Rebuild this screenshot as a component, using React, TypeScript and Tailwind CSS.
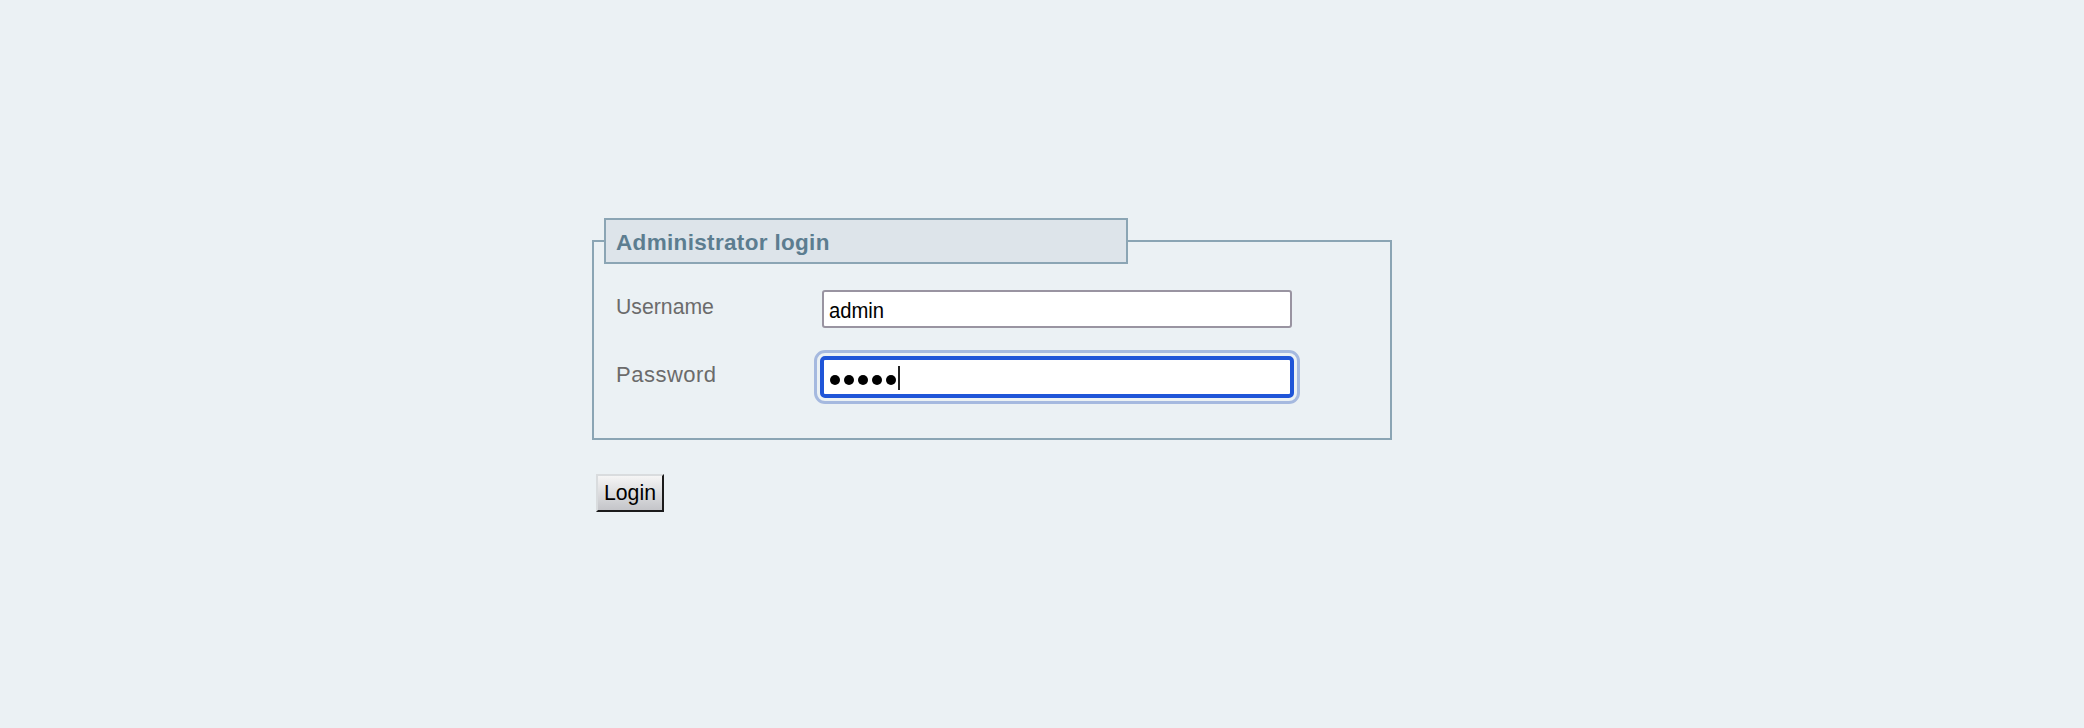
export default function App() {
  return (
    <main className="h-[728px] w-full overflow-hidden bg-[#ebf1f4] pt-[218px] pl-[592px] font-['Liberation_Sans',Arial,sans-serif]">
      <form onSubmit={(e) => e.preventDefault()}>
        <section className="flex w-[800px] flex-col">
          <div className="grid h-[46px] grid-cols-[12px_524px_264px]">
            <div className="mt-[22px] border-t-2 border-l-2 border-[#8ba5b4]" />
            <h1 className="flex items-center border-2 border-[#8ba5b4] bg-[#dde4ea] pt-[4px] pl-[10px] text-[22.5px] leading-none font-bold tracking-[0.33px] text-[#5c7d90]">
              Administrator login
            </h1>
            <div className="mt-[22px] border-t-2 border-r-2 border-[#8ba5b4]" />
          </div>
          <div className="flex h-[176px] flex-col border-x-2 border-b-2 border-[#8ba5b4] pt-[26px] pl-[22px]">
            <div className="flex h-[38px]">
              <label className="w-[206px] pt-[5px] text-[22px] leading-6 text-[#6b6b6b]">
                <span className="inline-block origin-left scale-x-[0.965]">Username</span>
              </label>
              <div className="flex w-[470px] items-center rounded-[3px] border-2 border-[#9994a1] bg-white pt-[3px] pl-[5px] text-[22px] leading-6 text-black">
                <span className="inline-block origin-left scale-x-[0.92]">admin</span>
              </div>
            </div>
            <div className="mt-[22px] flex h-[54px]">
              <label className="w-[198px] pt-[13px] text-[22px] leading-6 tracking-[0.5px] text-[#6b6b6b]">Password</label>
              <div className="flex w-[486px] rounded-[11px] border-3 border-[#a5b9df] p-[3px]">
                <div className="flex flex-1 items-center rounded-[5px] border-4 border-[#1f55d8] bg-white pl-[6px]">
                  <div className="flex gap-[4px] pt-[5px]">
                    {[0, 1, 2, 3, 4].map((i) => (
                      <span key={i} className="size-[10px] rounded-full bg-black" />
                    ))}
                  </div>
                  <span className="mt-[2px] ml-[2px] h-6 w-[2px] bg-[#222]" />
                </div>
              </div>
            </div>
          </div>
        </section>
        <button className="mt-[34px] ml-[4px] flex h-[38px] w-[68px] items-center border-t-2 border-r-2 border-b-2 border-l-2 border-t-[#d9dcde] border-r-[#1b1b1b] border-b-[#1b1b1b] border-l-[#d9dcde] bg-linear-to-b from-[#f5f5f5] to-[#c4c5c9] pl-[6px] text-[22px] leading-6 text-black">
          <span className="inline-block origin-left scale-x-[0.965]">Login</span>
        </button>
      </form>
    </main>
  );
}
